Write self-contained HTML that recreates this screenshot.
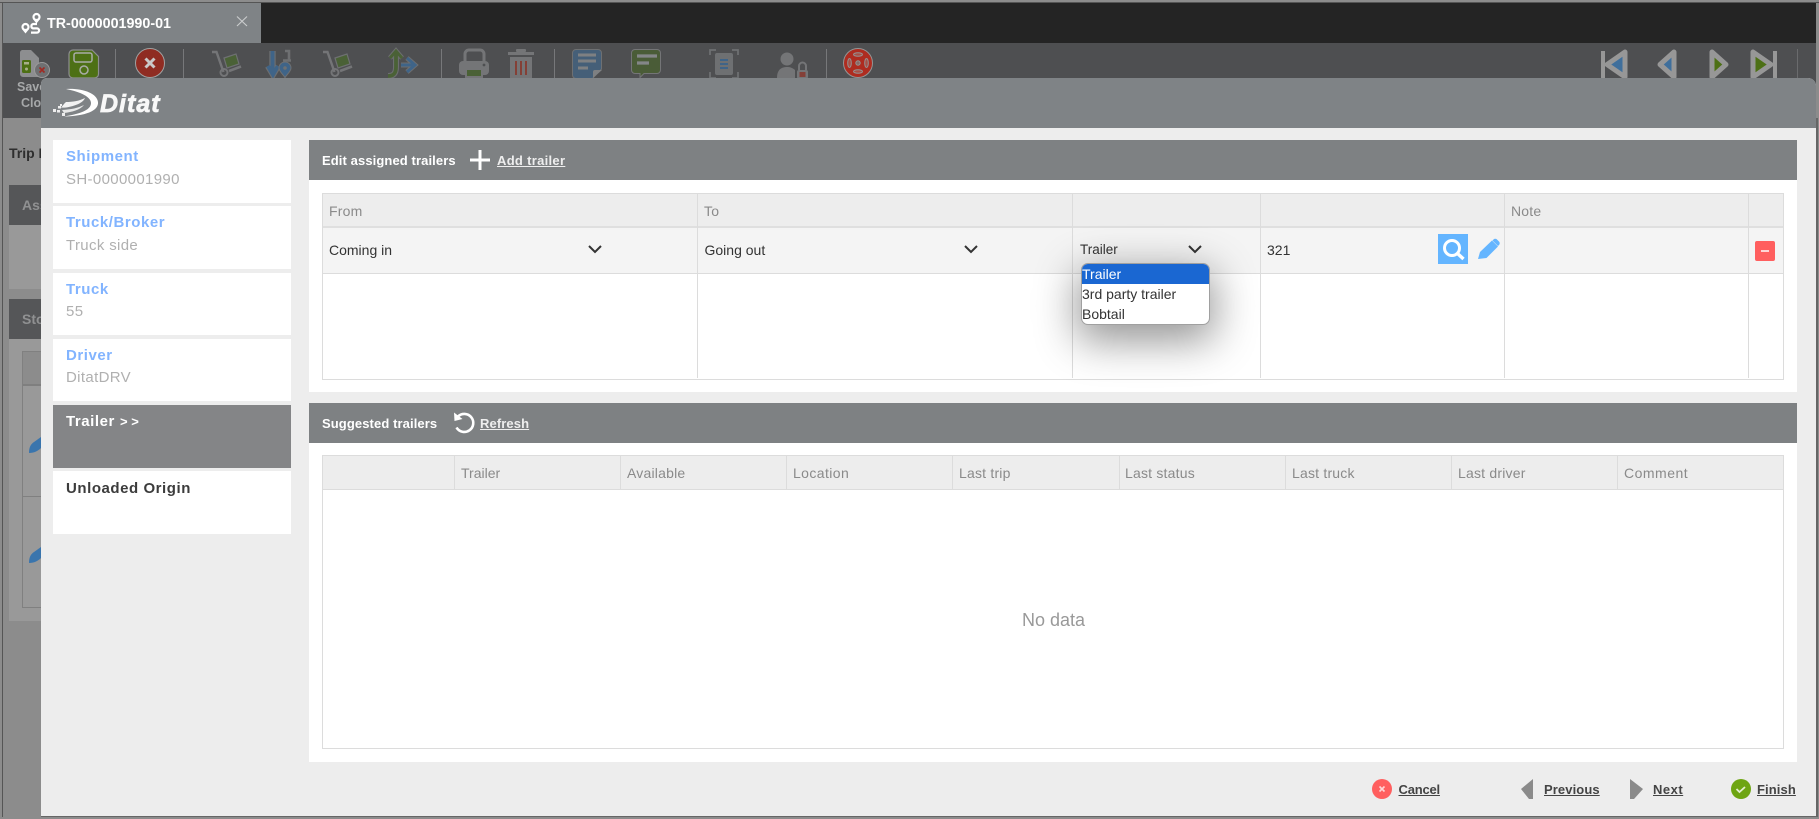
<!DOCTYPE html>
<html><head><meta charset="utf-8"><title>Ditat</title>
<style>
html,body{margin:0;padding:0;width:1819px;height:819px;overflow:hidden;background:#8c8c8c;font-family:"Liberation Sans",sans-serif}
div,span,a{position:absolute;white-space:nowrap;box-sizing:border-box}
svg{position:absolute;left:0;top:0}
.t{height:20px;line-height:20px}
.c{left:53px;width:238px;background:#fff}
.h{font-size:15px;font-weight:bold;color:#82b4ff;left:66px;letter-spacing:.55px}
.v{font-size:15px;color:#b0b0b0;left:66px;letter-spacing:.35px}
.pt{font-size:13px;font-weight:bold;color:#fff;letter-spacing:.1px}
.pl{font-size:13px;font-weight:bold;color:#eee;text-decoration:underline;letter-spacing:.3px}
.th{font-size:14px;color:#8a8a8a;letter-spacing:.2px}
.td{font-size:14px;color:#333}
.l{background:#dcdcdc}
.f{font-size:13px;font-weight:bold;color:#444;text-decoration:underline;top:780px;letter-spacing:.1px}
</style></head><body>

<!-- backdrop app -->
<div style="left:0;top:2px;width:1819px;height:1px;background:#555"></div>
<div style="left:2px;top:2px;width:1px;height:815px;background:#555"></div>
<div style="left:3px;top:3px;width:1813px;height:40px;background:#242424"></div>
<div style="left:3px;top:3px;width:258px;height:40px;background:#7f8386"></div>
<div class="t" style="left:47px;top:14px;font-size:14.300px;font-weight:bold;color:#fff">TR-0000001990-01</div>
<div style="left:3px;top:43px;width:1813px;height:75px;background:#4e4f51"></div>

<svg width="1819" height="819" viewBox="0 0 1819 819">
 <!-- tab icon -->
 <g fill="none" stroke="#fff" stroke-width="2.200">
  <circle cx="25.500" cy="27" r="3"/>
  <circle cx="36.500" cy="17" r="3"/>
  <path d="M37 24h-4a2.300 2.300 0 0 0 0 4.400h4a2 2 0 0 1 0 4.200h-6"/>
 </g>
 <path d="M25.500 33.500l-3.600-4.500h7.200zM36.500 23.500l-3.600-4.500h7.200z" fill="#fff"/>
 <path d="M237 16.500l10 9.500M247 16.500l-10 9.500" stroke="#c9cbcc" stroke-width="1.200"/>

 <!-- save & close -->
 <path d="M22 50h9l8 8v19H23a3 3 0 0 1-3-3V53a3 3 0 0 1 2-3z" fill="#8d8e90"/>
 <rect x="22" y="60" width="9" height="13" rx="1.500" fill="#4d7015"/>
 <rect x="24" y="62" width="5" height="2.500" fill="#a8b08a"/><circle cx="26.500" cy="69" r="1.500" fill="#a8b08a"/>
 <circle cx="42" cy="70" r="7.500" fill="#6f7072" stroke="#9a9a9a" stroke-width="1"/>
 <path d="M39.500 67.500l5 5M44.500 67.500l-5 5" stroke="#a02a22" stroke-width="1.600"/>
 <!-- save -->
 <path d="M73 50h19l6.500 6.500V74a4 4 0 0 1-4 4H73a4 4 0 0 1-4-4V54a4 4 0 0 1 4-4z" fill="#4d7015" stroke="#8d8e90" stroke-width="1.200"/>
 <rect x="74" y="53" width="18" height="9" rx="2" fill="none" stroke="#a9aca6" stroke-width="1.500"/>
 <circle cx="84" cy="70" r="4" fill="none" stroke="#a9aca6" stroke-width="1.500"/>
 <rect x="115" y="49" width="1" height="29" fill="#77787a"/>
 <circle cx="150" cy="63" r="14.500" fill="#8f2c22" stroke="#a1a1a1" stroke-width="1"/>
 <path d="M145.500 58.500l9 9M154.500 58.500l-9 9" stroke="#c9c9c9" stroke-width="3"/>
 <rect x="183" y="49" width="1" height="29" fill="#77787a"/>
 <!-- cart 1 -->
 <g id="cart"><path d="M212 52h4.500l7 20" fill="none" stroke="#747577" stroke-width="2.400"/><circle cx="224" cy="72.500" r="3.500" fill="none" stroke="#747577" stroke-width="2"/><path d="M229 71l12-4.500" stroke="#747577" stroke-width="2.600"/><path d="M224 58l12-4 3 10-12 4z" fill="#4a6136" stroke="#6e7072" stroke-width="1.200"/></g>
 <use href="#cart" x="111"/>
 <!-- arrow 1-9 -->
 <g fill="none" stroke="#6c6e70" stroke-width="6.400"><path d="M272.500 51v21M268 66l5 8.500 5-8.500"/></g>
 <path d="M272.500 51v21M268 66l5 8.500 5-8.500" fill="none" stroke="#3f6488" stroke-width="4"/>
 <path d="M285 51h4v10M283 60.500h8" stroke="#6e7072" stroke-width="2.600" fill="none"/>
 <path d="M291 68a6 6 0 0 0-12 0c0 4 6 8 6 10 0-2 6-6 6-10z" fill="#3f6488" stroke="#6e7072" stroke-width="1"/><circle cx="285" cy="68" r="1.800" fill="#6e7072"/>
 <!-- merge -->
 <path d="M396 52v15c0 7-3 9-8 9" fill="none" stroke="#6c6e70" stroke-width="6"/>
 <path d="M390 58l6-7 6 7" fill="none" stroke="#6c6e70" stroke-width="5"/>
 <path d="M396 52v15c0 7-3 9-8 9" fill="none" stroke="#4a6136" stroke-width="3.800"/>
 <path d="M390 58l6-7 6 7" fill="none" stroke="#4a6136" stroke-width="3"/>
 <path d="M401 65h12M407 58l8 7-8 7" fill="none" stroke="#6c6e70" stroke-width="5"/>
 <path d="M401 65h12M407 58l8 7-8 7" fill="none" stroke="#3f6488" stroke-width="3"/>
 <rect x="441" y="49" width="1" height="29" fill="#77787a"/>
 <!-- printer -->
 <path d="M465 62v-8a4 4 0 0 1 4-4h11a4 4 0 0 1 4 4v8" fill="none" stroke="#747577" stroke-width="3"/>
 <rect x="459" y="61" width="30" height="14" rx="4" fill="#747577"/>
 <rect x="465" y="68" width="18" height="10" fill="#747577"/>
 <rect x="467" y="70" width="14" height="6" fill="#4a6136"/>
 <circle cx="484" cy="65" r="1.400" fill="#4e4f51"/>
 <!-- trash -->
 <path d="M508 52h26v3h-26z" fill="#747577"/><rect x="516" y="49" width="10" height="3" rx="1" fill="#747577"/>
 <path d="M510 57h22v21h-22z" fill="#747577"/>
 <path d="M516 61v14M521 61v14M526 61v14" stroke="#863a30" stroke-width="1.800"/>
 <rect x="554" y="49" width="1" height="29" fill="#77787a"/>
 <!-- note -->
 <path d="M576 49.500h22a3.500 3.500 0 0 1 3.500 3.500v16l-9 9.500H576a3.500 3.500 0 0 1-3.500-3.500V53a3.500 3.500 0 0 1 3.500-3.500z" fill="#455f78" stroke="#6e7072"/>
 <path d="M578 55h18M578 61h18M578 68h10" stroke="#7e8082" stroke-width="3"/>
 <path d="M593 78v-6a2 2 0 0 1 2-2h7z" fill="#7e8082"/>
 <!-- chat -->
 <path d="M635 49.500h22a3.500 3.500 0 0 1 3.500 3.500v17a3.500 3.500 0 0 1-3.500 3.500h-13l-4 4v-4h-5a3.500 3.500 0 0 1-3.500-3.500V53a3.500 3.500 0 0 1 3.500-3.500z" fill="#4a5c37" stroke="#747577"/>
 <path d="M637 56h20M637 63h12" stroke="#848688" stroke-width="3.200"/>
 <!-- bracket doc -->
 <path d="M710 55v-5h6M732 50h6v5M710 72v6h6M732 78h6v-6" fill="none" stroke="#6e7072" stroke-width="1.800"/>
 <rect x="715" y="53" width="18" height="22" rx="2" fill="#6e7072"/>
 <path d="M720 60h8M720 64h8M720 68h8" stroke="#3f6488" stroke-width="2"/>
 <!-- user lock -->
 <circle cx="787" cy="59" r="6.500" fill="#747577"/>
 <path d="M777 78c0-9 5-11 10-11 3 0 5 .5 8 3v8z" fill="#747577"/>
 <path d="M799 70v-4a3.500 3.500 0 0 1 7 0v4" fill="none" stroke="#747577" stroke-width="2"/>
 <rect x="797" y="70" width="11" height="9" rx="2" fill="#747577"/><rect x="799.500" y="72" width="6" height="5" fill="#844038"/>
 <rect x="826" y="49" width="1" height="29" fill="#77787a"/>
 <!-- lifesaver -->
 <circle cx="858" cy="63" r="14.500" fill="#ae2c20" stroke="#949494" stroke-width="1"/>
 <circle cx="858" cy="63" r="2.200" fill="#8a6a66" stroke="#949494" stroke-width="1"/>
 <ellipse cx="858" cy="54.500" rx="4.500" ry="1.800" fill="#a85046" stroke="#949494" stroke-width="1"/>
 <ellipse cx="858" cy="71.500" rx="4.500" ry="1.800" fill="#a85046" stroke="#949494" stroke-width="1"/>
 <ellipse cx="849.500" cy="63" rx="1.800" ry="4.500" fill="#a85046" stroke="#949494" stroke-width="1"/>
 <ellipse cx="866.500" cy="63" rx="1.800" ry="4.500" fill="#a85046" stroke="#949494" stroke-width="1"/>
 <!-- nav -->
 <g stroke="#979797" stroke-width="5" stroke-linejoin="round">
  <path d="M1603 51v27" fill="none" stroke-width="4"/>
  <path d="M1625 52v25l-18-12.500z" fill="#3f6f9c"/>
  <path d="M1674 52v25l-14-12.500z" fill="#3f6f9c"/>
  <path d="M1712 52v25l14-12.500z" fill="#4d7015"/>
  <path d="M1753 52v25l18-12.500z" fill="#4d7015"/>
  <path d="M1775 51v27" fill="none" stroke-width="4"/>
 </g>
 <rect x="1797" y="49" width="1" height="29" fill="#6a6b6d"/>
</svg>

<div class="t" style="left:17px;top:77px;font-size:12.500px;font-weight:bold;color:#a6a8a9">Save &amp;</div>
<div class="t" style="left:21px;top:93px;font-size:12.500px;font-weight:bold;color:#a6a8a9">Close</div>

<!-- backdrop content -->
<div class="t" style="left:9px;top:143px;font-size:14px;font-weight:bold;color:#2e2e2e">Trip Info</div>
<div style="left:9px;top:185px;width:40px;height:104px;background:#999"></div>
<div style="left:9px;top:185px;width:40px;height:40px;background:#555658"></div>
<div class="t" style="left:22px;top:195px;font-size:14px;font-weight:bold;color:#909192">Assigned</div>
<div style="left:9px;top:299px;width:40px;height:322px;background:#999"></div>
<div style="left:9px;top:299px;width:40px;height:40px;background:#555658"></div>
<div class="t" style="left:22px;top:309px;font-size:14px;font-weight:bold;color:#909192">Stops</div>
<div style="left:22px;top:351px;width:30px;height:257px;border:1px solid #808080"></div>
<div style="left:23px;top:352px;width:29px;height:34px;background:#8c8c8c;border-bottom:2px solid #7f7f7f"></div>
<div style="left:23px;top:496px;width:29px;height:1px;background:#808080"></div>
<svg width="60" height="620" viewBox="0 0 60 620">
 <path d="M29 453c0-6 2-9 5-11l7-5v11c-3 3-7 5-12 5zM29 563c0-6 2-9 5-11l7-5v11c-3 3-7 5-12 5z" fill="#3a75ad"/>
</svg>

<!-- modal -->
<div style="left:41px;top:78px;width:1775px;height:738px;background:#ededed;border-radius:6px 8px 0 0;overflow:hidden">
 <div style="left:0;top:0;width:1775px;height:50px;background:#7f8386"></div>
</div>
<div style="left:1816px;top:118px;width:2px;height:699px;background:#666"></div>
<div style="left:41px;top:816px;width:1777px;height:1px;background:#666"></div>

<!-- logo -->
<svg width="170" height="130" viewBox="0 0 170 130">
 <path d="M66 89c16-1 31 4 32 13 1 9-13 14-34 14.500 15-2.500 27-6 27-13.500 0-6-10-11-25-14z" fill="#fff"/>
 <path d="M66 102c7 0 13-1 19-4-2 5-10 8-19 9.500-2 .2-4 .2-5 0 2-2 3-4 5-5.500z" fill="#f2f2f2"/>
 <path d="M62 110c9-.5 16-2 22-5-4 5-12 7-20 8z" fill="#e8e9e9"/>
 <path d="M53 109h3v3h-3zM58 106h3v2.500h-3zM57 110h3v2.500h-3zM62 113h3v3h-3zM60 104h2v2h-2z" fill="#eee"/>
</svg>
<div style="left:100px;top:89px;height:30px;line-height:30px;font-size:25px;font-weight:bold;font-style:italic;color:#f8f8f8;letter-spacing:1px;-webkit-text-stroke:.7px #f8f8f8">Ditat</div>

<!-- sidebar -->
<div class="c" style="top:140px;height:63px"></div>
<div class="c" style="top:206px;height:63px"></div>
<div class="c" style="top:273px;height:62px"></div>
<div class="c" style="top:339px;height:62px"></div>
<div class="c" style="top:405px;height:63px;background:#848587"></div>
<div class="c" style="top:471px;height:63px"></div>
<div class="t h" style="top:147px">Shipment</div><div class="t v" style="top:170px">SH-0000001990</div>
<div class="t h" style="top:213px">Truck/Broker</div><div class="t v" style="top:236px">Truck side</div>
<div class="t h" style="top:280px">Truck</div><div class="t v" style="top:302px">55</div>
<div class="t h" style="top:346px">Driver</div><div class="t v" style="top:368px">DitatDRV</div>
<div class="t h" style="top:412px;color:#fff">Trailer</div><div class="t" style="left:120px;top:412px;font-size:13px;font-weight:bold;color:#fff">&gt; &gt;</div>
<div class="t h" style="top:479px;color:#3c3c3c">Unloaded Origin</div>

<!-- panel 1 -->
<div style="left:309px;top:140px;width:1488px;height:252px;background:#fff"></div>
<div style="left:309px;top:140px;width:1488px;height:40px;background:#7e8183"></div>
<div class="t pt" style="left:322px;top:151px">Edit assigned trailers</div>
<svg width="20" height="20" viewBox="0 0 20 20" style="left:470px;top:150px"><path d="M10 0v20M0 10h20" stroke="#fff" stroke-width="3"/></svg>
<div class="t pl" style="left:497px;top:151px">Add trailer</div>

<div style="left:322px;top:193px;width:1462px;height:187px;border:1px solid #dcdcdc"></div>
<div style="left:323px;top:194px;width:1460px;height:32px;background:#ededed"></div>
<div style="left:323px;top:226px;width:1460px;height:2px;background:#dfdfdf"></div>
<div style="left:323px;top:228px;width:1460px;height:45px;background:#f4f4f4"></div>
<div style="left:323px;top:273px;width:1460px;height:1px;background:#dcdcdc"></div>
<div class="l" style="left:697px;top:194px;width:1px;height:184px"></div>
<div class="l" style="left:1072px;top:194px;width:1px;height:184px"></div>
<div class="l" style="left:1260px;top:194px;width:1px;height:184px"></div>
<div class="l" style="left:1504px;top:194px;width:1px;height:184px"></div>
<div class="l" style="left:1748px;top:194px;width:1px;height:184px"></div>
<div class="t th" style="left:329px;top:201px">From</div>
<div class="t th" style="left:704px;top:201px">To</div>
<div class="t th" style="left:1511px;top:201px">Note</div>
<div class="t td" style="left:329px;top:240px">Coming in</div>
<div class="t td" style="left:704.500px;top:240px">Going out</div>
<div class="t td" style="left:1080px;top:240px;font-size:13.500px">Trailer</div>
<div class="t td" style="left:1267px;top:240px">321</div>
<svg width="1819" height="819" viewBox="0 0 1819 819">
 <path d="M589 246l6 6 6-6M965 246l6 6 6-6M1189 246l6 6 6-6" fill="none" stroke="#333" stroke-width="2"/>
</svg>
<div style="left:1438px;top:234px;width:30px;height:30px;background:#64b5ff"></div>
<svg width="30" height="30" viewBox="0 0 30 30" style="left:1438px;top:234px"><circle cx="14" cy="14" r="7.500" fill="none" stroke="#fff" stroke-width="3"/><path d="M19.500 19.500l6 5.500" stroke="#fff" stroke-width="3.400"/></svg>
<svg width="22" height="22" viewBox="0 0 22 22" style="left:1478px;top:238px"><path d="M0 21l2-7L14 2.500l6 6L8.500 20z" fill="#64b5ff"/><path d="M15.500 1.500a2.500 2.500 0 0 1 3.500 0l2 2a2.500 2.500 0 0 1 0 3.500L20 8l-5.500-5.500z" fill="#64b5ff"/></svg>
<div style="left:1755px;top:241px;width:20px;height:20px;background:#ff5f5f;border-radius:2px"></div>
<div style="left:1761px;top:250px;width:8px;height:2px;background:#ffd5d5"></div>

<!-- dropdown -->
<div style="left:1081px;top:263px;width:129px;height:62px;background:#fff;border:1px solid #a0a0a0;border-radius:7px;box-shadow:0 12px 42px 4px rgba(0,0,0,.42);font-size:14px;color:#333"></div>
<div style="left:1082px;top:264px;width:127px;height:60px;border-radius:6px;overflow:hidden;font-size:14px;color:#333">
 <div style="left:0;top:0;width:127px;height:20px;background:#1a67d2;color:#fff;line-height:20px">Trailer</div>
 <div style="left:0;top:20px;width:127px;height:20px;line-height:20px">3rd party trailer</div>
 <div style="left:0;top:40px;width:127px;height:20px;line-height:20px">Bobtail</div>
</div>

<!-- panel 2 -->
<div style="left:309px;top:403px;width:1488px;height:359px;background:#fff"></div>
<div style="left:309px;top:403px;width:1488px;height:40px;background:#7e8183"></div>
<div class="t pt" style="left:322px;top:414px">Suggested trailers</div>
<svg width="24" height="24" viewBox="0 0 24 24" style="left:452px;top:411px"><path d="M6 5.500a9 9 0 1 1-1.500 11" fill="none" stroke="#fff" stroke-width="2.600"/><path d="M2 1.500l.5 8.500 8-2z" fill="#fff"/></svg>
<div class="t pl" style="left:480px;top:414px;letter-spacing:.1px">Refresh</div>

<div style="left:322px;top:455px;width:1462px;height:294px;border:1px solid #dcdcdc"></div>
<div style="left:323px;top:456px;width:1460px;height:33px;background:#ededed"></div>
<div style="left:323px;top:489px;width:1460px;height:1px;background:#dcdcdc"></div>
<div class="l" style="left:454px;top:456px;width:1px;height:33px"></div>
<div class="l" style="left:620px;top:456px;width:1px;height:33px"></div>
<div class="l" style="left:786px;top:456px;width:1px;height:33px"></div>
<div class="l" style="left:952px;top:456px;width:1px;height:33px"></div>
<div class="l" style="left:1119px;top:456px;width:1px;height:33px"></div>
<div class="l" style="left:1285px;top:456px;width:1px;height:33px"></div>
<div class="l" style="left:1451px;top:456px;width:1px;height:33px"></div>
<div class="l" style="left:1617px;top:456px;width:1px;height:33px"></div>
<div class="t th" style="left:461px;top:463px;letter-spacing:0">Trailer</div>
<div class="t th" style="left:627px;top:463px">Available</div>
<div class="t th" style="left:793px;top:463px;letter-spacing:.4px">Location</div>
<div class="t th" style="left:959px;top:463px">Last trip</div>
<div class="t th" style="left:1125px;top:463px">Last status</div>
<div class="t th" style="left:1292px;top:463px">Last truck</div>
<div class="t th" style="left:1458px;top:463px">Last driver</div>
<div class="t th" style="left:1624px;top:463px;letter-spacing:.5px">Comment</div>
<div style="left:1022px;top:609px;height:22px;line-height:22px;font-size:18px;color:#999">No data</div>

<!-- footer -->
<svg width="1819" height="819" viewBox="0 0 1819 819">
 <circle cx="1382" cy="789" r="10" fill="#ff5f5f"/>
 <path d="M1379.500 786.500l5 5M1384.500 786.500l-5 5" stroke="#ffd5d5" stroke-width="1.600"/>
 <path d="M1533 779v20h-4l-8-10z" fill="#8a8a8a"/>
 <path d="M1630 779v20h4l9-10z" fill="#8a8a8a"/>
 <circle cx="1741" cy="789" r="10" fill="#6ea512"/>
 <path d="M1736.500 789l3 3 5.500-5" fill="none" stroke="#e4efcf" stroke-width="1.800"/>
</svg>
<div class="t f" style="left:1398.500px;letter-spacing:-.2px">Cancel</div>
<div class="t f" style="left:1544px">Previous</div>
<div class="t f" style="left:1653px;letter-spacing:.5px">Next</div>
<div class="t f" style="left:1757px">Finish</div>
</body></html>
